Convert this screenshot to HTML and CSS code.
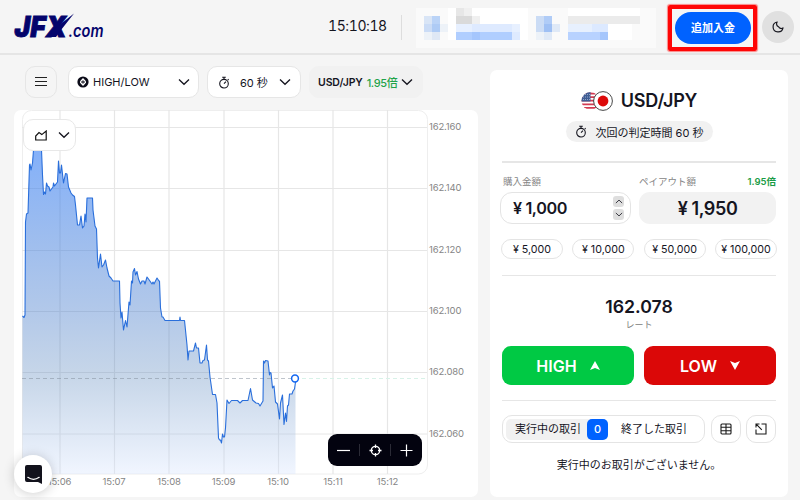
FILE: index.html
```html
<!DOCTYPE html>
<html lang="ja">
<head>
<meta charset="utf-8">
<title>JFX.com</title>
<link rel="stylesheet" href="styles.css">
</head>
<body>
<svg class="defs" width="0" height="0">
  <symbol id="chev" viewBox="0 0 12 8"><path d="M1 1.5 6 6.3 11 1.5" fill="none" stroke="currentColor" stroke-width="1.3"/></symbol>
  <symbol id="timer" viewBox="0 0 12 13"><g fill="none" stroke="currentColor" stroke-width="1.1"><circle cx="6" cy="7.7" r="4.3"/><path d="M4.2 1.2h3.6M6 1.2v2M6 7.7 8 5.700M9.800 3.200l.8.8"/></g></symbol>
</svg>
<header class="header">
  <svg class="logo" width="92" height="28" viewBox="0 0 92 28">
    <g fill="#04046c">
      <text class="logo-main" x="1.500" y="24" textLength="52" lengthAdjust="spacingAndGlyphs">JFX</text>
      <path d="M61 .5 40 17 36 24 43 24 48 17Z"/>
      <text class="logo-sub" x="55.500" y="24" textLength="35" lengthAdjust="spacingAndGlyphs">.com</text>
    </g>
  </svg>
  <div class="clock">15:10:18</div>
  <div class="sep"></div>
  <svg class="mosaic" width="240" height="40" viewBox="416 8 240 40" shape-rendering="crispEdges">
    <path fill="#fafafa" d="M416 8h240v40H416z"/>
    <path fill="#fff" d="M448 8h80v32h-80zM568 8h72v8h-72zM608 24h24v16h-24z"/>
    <path fill="#d9e5f6" d="M424 16h8v8h-8z"/><path fill="#bad3f7" d="M432 16h8v8h-8z"/>
    <path fill="#cbdcf6" d="M424 24h8v8h-8z"/><path fill="#aecbf5" d="M432 24h8v8h-8z"/>
    <path fill="#edf2f8" d="M424 32h8v8h-8zM440 24h8v8h-8z"/><path fill="#dfe8f5" d="M432 32h8v8h-8z"/>
    <path fill="#e7e7e7" d="M456 8h8v8h-8z"/><path fill="#f0f0f0" d="M464 8h8v8h-8zM472 16h8v8h-8z"/><path fill="#dadada" d="M456 16h16v8h-16z"/>
    <path fill="#e7f0ff" d="M456 24h16v8h-16zM512 24h8v8h-8z"/><path fill="#deeaff" d="M472 24h40v8h-40zM512 32h8v8h-8z"/><path fill="#b0ceff" d="M456 32h56v8h-56z"/><path fill="#a5c6fd" d="M472 32h8v8h-8z"/>
    <path fill="#cbdcf5" d="M536 16h8v16h-8z"/><path fill="#b0ccf7" d="M544 16h8v8h-8z"/><path fill="#9fc0f4" d="M544 24h8v8h-8z"/><path fill="#dfe9f7" d="M552 24h8v8h-8zM544 32h8v8h-8z"/><path fill="#edf2f8" d="M536 32h8v8h-8z"/>
    <path fill="#ebebeb" d="M568 16h72v8h-72z"/><path fill="#e7f0fe" d="M568 24h24v8h-24z"/><path fill="#dce9ff" d="M592 24h16v8h-16z"/><path fill="#b8d2ff" d="M568 32h32v8h-32z"/><path fill="#a5c6fc" d="M600 32h8v8h-8z"/>
  </svg>
  <div class="highlight"><button class="deposit">追加入金</button></div>
  <button class="theme"><svg width="12" height="12" viewBox="0 0 12 12"><path d="M5.200 1A5 5 0 1 0 11 6.900 2.900 2.900 0 0 1 6.600 5.700 3 3 0 0 1 5.200 1Z" fill="none" stroke="#181820" stroke-width="1.200" stroke-linejoin="round"/></svg></button>
</header>

<main class="main">
  <section class="left">
    <div class="toolbar">
      <button class="tool menu"><svg width="12" height="10" viewBox="0 0 12 10" shape-rendering="crispEdges"><path d="M0 0h12v1H0zM0 4h12v1H0zM0 8h12v1H0z" fill="#222"/></svg></button>
      <button class="tool mode"><svg width="12" height="12" viewBox="0 0 12 12"><circle cx="6" cy="6" r="5.600" fill="#0b0b18"/><path d="M3 5.200 6 2 9 5.200V6.800L6 10 3 6.800Z" fill="#fff"/><path d="M4 6h4M6 4.300v3.400" stroke="#0b0b18"/></svg><span>HIGH/LOW</span><svg class="chev" width="12" height="8"><use href="#chev"/></svg></button>
      <button class="tool time"><svg width="12" height="13"><use href="#timer"/></svg><span>60 秒</span><svg class="chev" width="12" height="8"><use href="#chev"/></svg></button>
      <button class="tool pair"><b>USD/JPY</b><em>1.95倍</em><svg width="12" height="8"><use href="#chev"/></svg></button>
    </div>
    <div class="chart">
      <svg width="464" height="387" viewBox="14 110 464 387">
        <defs>
          <linearGradient id="fill" x1="0" y1="150" x2="0" y2="474" gradientUnits="userSpaceOnUse"><stop offset="0" stop-color="#3b82f6" stop-opacity=".63"/><stop offset=".5" stop-color="#487dcc" stop-opacity=".42"/><stop offset=".7" stop-color="#5a87bd" stop-opacity=".34"/><stop offset="1" stop-color="#d6e4ff" stop-opacity=".35"/></linearGradient>
        </defs>
        <g fill="none" stroke="#e6e6e6">
          <rect x="22.500" y="110.500" width="405" height="363.500" rx="9" stroke="#eee"/>
          <path d="M60 110v364M114.500 110v364M169 110v364M224 110v364M278.500 110v364M333 110v364M387.500 110v364" stroke-width="1.200"/>
          <path d="M22 127.500h405M22 188.500h405M22 250.500h405M22 311.500h405M22 372.500h405M22 434h405"/>
        </g>
        <path d="M295 378.500h132" stroke="#d8f2e8" stroke-dasharray="4 3"/>
        <path id="area" fill="url(#fill)"/>
        <path d="M22 378.500h273" stroke="#7f8b99" stroke-opacity=".5" stroke-dasharray="4 3"/>
        <path id="line" fill="none" stroke="#2a6fdb" stroke-width="1.100" stroke-linejoin="round"/>
        <circle cx="295" cy="378.500" r="3.400" fill="#fff" stroke="#1266f1" stroke-width="1.500"/>
        <g class="axis">
          <text x="429" y="130">162.160</text><text x="429" y="191">162.140</text><text x="429" y="252.500">162.120</text><text x="429" y="314">162.100</text><text x="429" y="375">162.080</text><text x="429" y="436.500">162.060</text>
        </g>
        <g class="axis mid">
          <text x="59.500" y="484.500">15:06</text><text x="114" y="484.500">15:07</text><text x="169" y="484.500">15:08</text><text x="223.500" y="484.500">15:09</text><text x="278" y="484.500">15:10</text><text x="333" y="484.500">15:11</text><text x="387.500" y="484.500">15:12</text>
        </g>
      </svg>
      <button class="type"><svg width="12" height="11" viewBox="0 0 12 11"><path d="M.7 10V6L4 2.600 6.800 4.600 11.200 1V10Z" fill="none" stroke="#111" stroke-width="1.200"/></svg><svg width="12" height="8"><use href="#chev"/></svg></button>
      <div class="zoombar">
        <svg width="13" height="13" viewBox="0 0 13 13"><path d="M0 6.500h13" stroke="#fff" stroke-width="1.200"/></svg>
        <i></i>
        <svg width="13" height="13" viewBox="0 0 13 13"><g fill="none" stroke="#fff" stroke-width="1.300"><circle cx="6.500" cy="6.500" r="4.200"/><path d="M6.500 .5v3.500M6.500 9v3.500M.5 6.500H4M9 6.500h3.500"/></g></svg>
        <i></i>
        <svg width="13" height="13" viewBox="0 0 13 13"><path d="M.5 6.500h12M6.500 .5v12" stroke="#fff" stroke-width="1.200"/></svg>
      </div>
    </div>
  </section>

  <section class="panel">
    <div class="title">
      <svg width="32" height="22" viewBox="0 0 32 22">
        <clipPath id="us"><circle cx="9.500" cy="11" r="9"/></clipPath>
        <g clip-path="url(#us)"><path fill="#fff" d="M0 0h20v22H0z"/><path d="M0 3.500h20M0 7.100h20M0 10.700h20M0 14.300h20M0 17.900h20" stroke="#d33b52" stroke-width="1.800"/><path fill="#3f5d94" d="M0 1h9.500v10.500H0z"/><path d="M2 4.500h7M2 7h7M2 9.500h7" stroke="#a9b8d4" stroke-width=".8" stroke-dasharray="1 1"/></g>
        <circle cx="22" cy="11" r="9.400" fill="#fff" stroke="#333" stroke-width=".9"/><circle cx="22" cy="11" r="5.400" fill="#dc0a0a"/>
      </svg>
      <h1>USD/JPY</h1>
    </div>
    <div class="next"><svg width="12" height="13"><use href="#timer"/></svg><span>次回の判定時間 60 秒</span></div>
    <hr class="thick">
    <div class="labels"><span>購入金額</span><span>ペイアウト額</span><b>1.95倍</b></div>
    <div class="amounts">
      <div class="input"><span>¥ 1,000</span><div class="steps"><i><svg class="up" width="8" height="5"><use href="#chev"/></svg></i><i><svg width="8" height="5"><use href="#chev"/></svg></i></div></div>
      <div class="payout">¥ 1,950</div>
    </div>
    <div class="chips"><button>¥ 5,000</button><button>¥ 10,000</button><button>¥ 50,000</button><button>¥ 100,000</button></div>
    <hr>
    <div class="rate">162.078</div>
    <div class="rate-label">レート</div>
    <div class="orders">
      <button class="high"><span>HIGH</span><svg width="10" height="9" viewBox="0 0 10 9"><path d="M5 0 10 9 5 7 0 9Z" fill="#fff"/></svg></button>
      <button class="low"><span>LOW</span><svg width="10" height="9" viewBox="0 0 10 9"><path d="M5 9 10 0 5 2 0 0Z" fill="#fff"/></svg></button>
    </div>
    <hr>
    <div class="trades">
      <div class="tabs"><div class="tab active"><span>実行中の取引</span><b>0</b></div><div class="tab">終了した取引</div></div>
      <button class="icon"><svg width="12" height="12" viewBox="0 0 12 12"><g fill="none" stroke="#1a1a1a" stroke-width="1.100"><rect x="1" y="1" width="10" height="10" rx="1"/><path d="M1 4.300h10M1 7.700h10M6 1v10"/></g></svg></button>
      <button class="icon"><svg width="12" height="12" viewBox="0 0 12 12"><g fill="none" stroke="#1a1a1a" stroke-width="1.100"><path d="M6.500 1H11V11H1V6.500M1 4.500V1h3.500M1.200 1.200 6.800 6.800"/></g></svg></button>
    </div>
    <p class="empty">実行中のお取引がございません。</p>
  </section>
</main>
<button class="chat"><svg width="17" height="19" viewBox="0 0 17 19"><path d="M2 0h13a2 2 0 0 1 2 2v17l-4-2H2a2 2 0 0 1-2-2V2a2 2 0 0 1 2-2Z" fill="#12121c"/><path d="M2.800 12.300q5.700 4 11.400 0" fill="none" stroke="#fff" stroke-width="1.200" stroke-linecap="round"/></svg></button>
<script src="chart.js"></script>
</body>
</html>
```
FILE: styles.css
```css
* { box-sizing: border-box; }
body { margin: 0; width: 800px; height: 500px; overflow: hidden; background: #f5f5f5; color: #15151f; font-family: Inter, "Noto Sans CJK JP", sans-serif; font-size: 11px; }
button { margin: 0; padding: 0; border: 0; font: inherit; color: inherit; background: none; }
svg { display: block; flex: none; }
.defs { position: absolute; }

.header { display: flex; align-items: flex-start; height: 55px; padding-left: 13px; border-bottom: 2px solid #e5e5e5; }
.logo { margin-top: 13px; overflow: visible; }
.logo-main { font: italic 900 29px Inter, sans-serif; stroke: #04046c; stroke-width: .8px; }
.logo-sub { font: italic 600 17px Inter, sans-serif; }
.clock { width: 73px; margin: 15px 0 0 223px; font-size: 14px; line-height: 21px; letter-spacing: -.4px; font-feature-settings: "tnum"; white-space: nowrap; }
.sep { width: 1px; height: 25px; margin-top: 15px; background: #ddd; }
.mosaic { margin: 8px 0 0 14px; }
.highlight { width: 89px; height: 46px; margin: 5px 0 0 12px; padding: 3px 2px 3px 3px; border: 4px solid #ff0505; border-radius: 2px; box-shadow: 0 0 1px 1px rgba(255, 60, 60, .6); }
.deposit { width: 76px; height: 32px; border-radius: 16px; background: #0062ff; color: #fff; font-weight: 700; font-size: 11px; line-height: 30px; }
.theme { display: grid; place-items: center; width: 32px; height: 32px; margin: 11px 0 0 5px; border-radius: 50%; background: #e0e0e0; }

.main { display: flex; align-items: flex-start; padding-left: 14px; }
.left { width: 464px; padding-top: 11px; }
.toolbar { display: flex; height: 44px; padding-left: 11px; }
.tool { display: flex; align-items: center; height: 32px; border: 1px solid #e6e6e6; border-radius: 10px; background: #fff; white-space: nowrap; }
.menu { justify-content: center; width: 32px; background: #f5f5f5; }
.mode { width: 131px; margin-left: 11px; padding: 0 8px 0 8px; gap: 4px; }
.mode span { font-size: 11px; letter-spacing: 0; }
.time { width: 94px; margin-left: 8px; padding: 0 9px 0 10px; gap: 10px; }
.chev { margin-left: auto; }
.pair { width: 114px; margin-left: 8px; padding-left: 8px; gap: 4px; border-color: #f1f1f1; background: #f1f1f1; }
.pair b { font-weight: 600; font-size: 10.500px; letter-spacing: -.1px; }
.pair em { font-style: normal; font-weight: 500; font-size: 11px; color: #1fa34a; letter-spacing: -.4px; }
.chart { position: relative; height: 387px; border-radius: 7px; background: #fff; }
.axis { font: 9.500px Inter, sans-serif; fill: #858585; letter-spacing: -.15px; }
.mid { text-anchor: middle; }
.type { position: absolute; left: 9px; top: 9px; display: flex; align-items: center; justify-content: space-between; width: 53px; height: 32px; padding: 0 5px 0 11px; border: 1px solid #e8e8e8; border-radius: 10px; background: #fff; }
.zoombar { position: absolute; left: 314px; top: 324px; display: flex; align-items: center; justify-content: space-between; width: 94px; height: 32px; padding: 0 9px; border-radius: 9px; background: #03030f; }
.zoombar i { width: 1px; height: 12px; background: #2b2b36; }

.panel { width: 298px; height: 427px; margin: 15px 0 0 12px; padding: 20px 12px 0; border-radius: 7px; background: #fff; }
.title { display: flex; align-items: center; justify-content: center; gap: 8px; height: 22px; }
h1 { margin: 0; font-size: 18px; font-weight: 600; line-height: 22px; letter-spacing: -.2px; }
.next { display: flex; align-items: center; gap: 9px; width: 147px; height: 21px; margin: 9px auto 18px; padding-left: 9px; border-radius: 11px; background: #f1f1f1; white-space: nowrap; }
hr { height: 1px; margin: 0; border: 0; background: #e6e6e6; }
.thick { height: 2px; margin-top: 19px; }
.labels { display: flex; align-items: center; height: 20px; margin-top: 8px; padding-left: 1px; font-size: 9.500px; color: #858585; white-space: nowrap; }
.labels span:first-child { width: 136px; }
.labels b { margin-left: auto; color: #1a9c46; font-weight: 600; }
.amounts { display: flex; gap: 8px; margin: 1px 0 0 -2px; font-weight: 600; letter-spacing: -.4px; }
.input { display: flex; align-items: center; justify-content: space-between; width: 131px; height: 32px; padding: 0 6px 0 12px; border: 1px solid #e4e4e4; border-radius: 12px; font-size: 16.200px; }
.steps { display: grid; gap: 2px; }
.steps i { display: grid; place-items: center; width: 11px; height: 11px; border-radius: 3px; background: #dedede; }
.up { transform: rotate(180deg); }
.payout { width: 137px; height: 32px; border-radius: 11px; background: #f2f2f2; font-size: 18px; line-height: 34px; text-align: center; }
.chips { display: flex; justify-content: space-between; margin: 15px -1px 16px; }
.chips button { width: 62px; height: 20px; border: 1px solid #e4e4e4; border-radius: 10px; font-size: 10.700px; white-space: nowrap; }
.rate { height: 24px; margin-top: 19px; font-size: 17.700px; font-weight: 600; line-height: 24px; text-align: center; }
.rate-label { height: 12px; font-size: 9px; line-height: 12px; text-align: center; color: #808080; }
.orders { display: flex; justify-content: space-between; margin: 15px 0; color: #fff; }
.orders button { display: flex; align-items: center; justify-content: center; gap: 13px; width: 132px; height: 39px; border-radius: 9px; font-size: 16px; font-weight: 600; }
.high { background: #00c944; }
.low { background: #db0808; }
.trades { display: flex; margin-top: 14px; }
.tabs { display: flex; align-items: center; width: 203px; height: 28px; margin-right: 6px; padding-left: 3px; border: 1px solid #e4e4e4; border-radius: 10px; }
.tab { white-space: nowrap; line-height: 20px; }
.active { display: flex; justify-content: space-between; width: 102px; height: 21px; margin-right: 13px; padding-left: 9px; border-radius: 5px; background: #f1f1f1; }
.active b { width: 21px; border-radius: 5px; background: #0062ff; color: #fff; font-weight: 500; text-align: center; line-height: 21px; }
.icon { display: grid; place-items: center; width: 30px; height: 28px; border: 1px solid #e4e4e4; border-radius: 10px; }
.icon + .icon { margin-left: 5px; }
.empty { margin: 13px 0 0; text-align: center; line-height: 18px; }
.chat { position: absolute; left: 14px; top: 455px; display: grid; place-items: center; width: 38px; height: 38px; border-radius: 50%; background: #fff; box-shadow: 0 1px 12px rgba(0, 0, 0, .2); }
```
FILE: chart.js
```js
const points = "22.5,316 24,317.5 25,315 25.5,222 26.5,214 28,213 29.5,165 30,164 31,170 32.5,163 33.5,150 41.5,150 42.5,175 43.5,194.5 44.5,192 45.5,194 46.5,183 47.5,186 49,187 50,191 51.5,189 53,187 53.5,183 54.5,186 57.5,182 58.5,161 59.5,173 60.5,173 61.5,165 63.5,183 65.5,173.5 67,174 68.5,187 71,193 72.5,195 74.5,196.5 75.5,205 77.5,225 79.5,225 81,216 82.5,228 84,226 85,214 86,222 87,198 92.5,198 93,210 95,226 96.5,229 97.5,258 98.5,268 100.5,254 102,267 103.5,265 105.5,260 107,268 109,276 111,278 113,281 119.5,281 120,303 121,318 122,312 123.5,330 125.5,320.5 127,327 129,302 130,305 131.5,281 132.5,283 133,272 134.5,268.5 135.5,275 137,271.5 138.5,279 140.5,284 142,281 144,281 145,284 147,277 148.5,279 152,284 153,282 154,284 157,278 159,281 159.5,281 160.5,308 162,317 163,317 165,320.5 179.5,320.5 180,317 180.5,320.5 184.5,320.5 187,345 188,360 189,351 193.5,351 195.5,343 196.5,348 198.5,348 200,363 202,363 203,360.5 204.5,360 206.5,345 207.5,360 208.5,361 210,377 212.5,394.5 215.5,394.5 217,403 218.5,438 219.5,440 220.5,440 221.5,443 222.5,434 223.5,437 224.5,437 225.5,428 227,400 229,403.5 231.5,400.5 237.5,400.5 240,403 242.5,400.5 248,400.5 250.5,388.5 252.5,400 256,403 258.5,403.5 260,406 263,401 263.5,361 264.5,363 265.5,360.5 268,361 269.5,375 270,372.5 271,373 272.5,388 274,386 275.5,402 277.5,404 279.5,419 280.5,403 282.5,395 284,424.5 285.5,413 286.5,421.5 287.5,406 288.5,405 289.5,394 292,394 293,391 294.5,389 295.5,382 295.5,378";
const line = "M" + points.split(" ").join("L");
document.getElementById("line").setAttribute("d", line);
document.getElementById("area").setAttribute("d", line + "V474H22.5Z");
```
